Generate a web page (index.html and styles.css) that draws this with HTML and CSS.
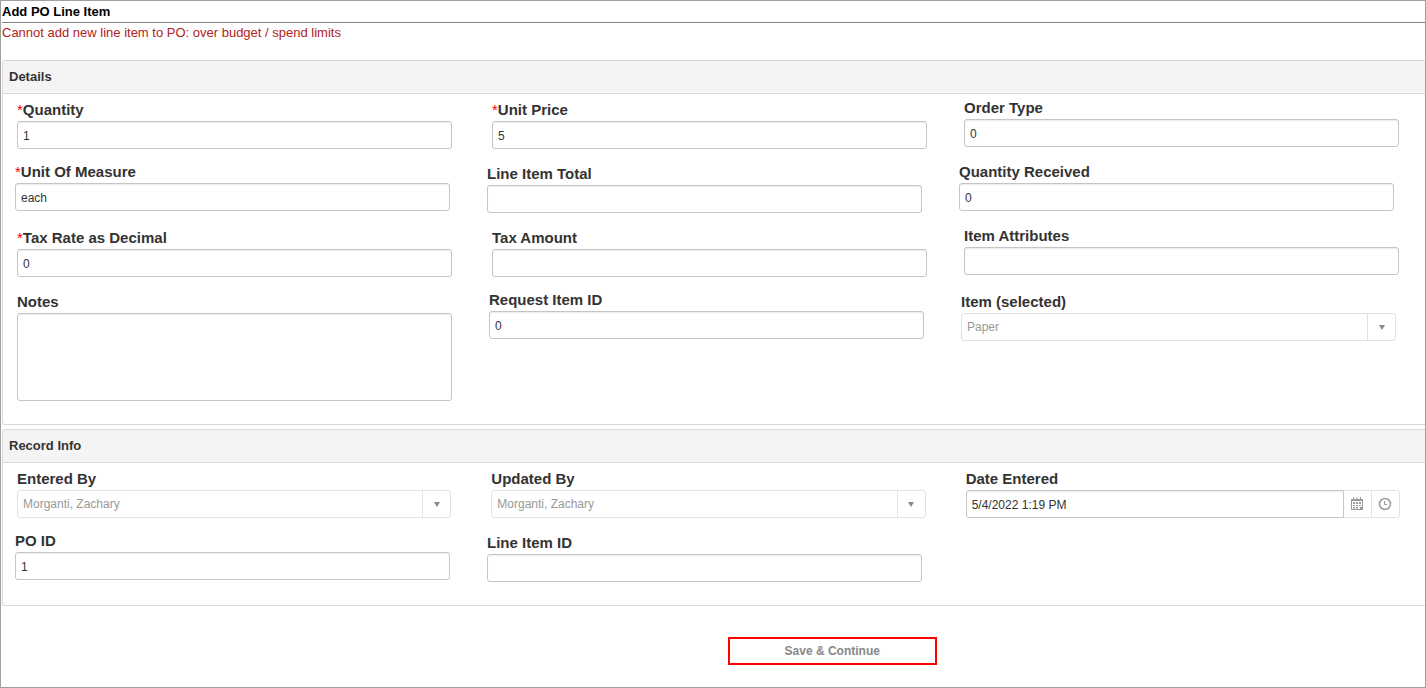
FILE: index.html
```html
<!DOCTYPE html>
<html lang="en">
<head>
<meta charset="utf-8">
<title>Add PO Line Item</title>
<link rel="stylesheet" href="styles.css">
</head>
<body>
<form class="page">
  <h1 class="title">Add PO Line Item</h1>
  <p class="message">Cannot add new line item to PO: over budget / spend limits</p>

  <section class="panel">
    <h2 class="panel-title">Details</h2>
    <div class="panel-body">
      <div class="row row-wide">
        <div class="field low"><label class="label" for="qty"><span class="req">*</span>Quantity</label><input class="input" id="qty" value="1"></div>
        <div class="field low"><label class="label" for="price"><span class="req">*</span>Unit Price</label><input class="input" id="price" value="5"></div>
        <div class="field"><label class="label" for="otype">Order Type</label><input class="input" id="otype" value="0"></div>
      </div>
      <div class="row row-narrow">
        <div class="field"><label class="label" for="uom"><span class="req">*</span>Unit Of Measure</label><input class="input" id="uom" value="each"></div>
        <div class="field low"><label class="label" for="total">Line Item Total</label><input class="input" id="total"></div>
        <div class="field"><label class="label" for="received">Quantity Received</label><input class="input" id="received" value="0"></div>
      </div>
      <div class="row row-wide">
        <div class="field low"><label class="label" for="rate"><span class="req">*</span>Tax Rate as Decimal</label><input class="input" id="rate" value="0"></div>
        <div class="field low"><label class="label" for="tax">Tax Amount</label><input class="input" id="tax"></div>
        <div class="field"><label class="label" for="attrs">Item Attributes</label><input class="input" id="attrs"></div>
      </div>
      <div class="row">
        <div class="field low"><label class="label" for="notes">Notes</label><textarea class="input notes" id="notes"></textarea></div>
        <div class="field"><label class="label" for="reqid">Request Item ID</label><input class="input" id="reqid" value="0"></div>
        <div class="field low">
          <label class="label" for="item">Item (selected)</label>
          <div class="combo"><select class="combo-select" id="item" disabled><option>Paper</option></select><span class="combo-button"><svg class="arrow" viewBox="0 0 6 5"><path d="M0 0h6L3 5z"/></svg></span></div>
        </div>
      </div>
    </div>
  </section>

  <section class="panel">
    <h2 class="panel-title">Record Info</h2>
    <div class="panel-body">
      <div class="row row-even">
        <div class="field low">
          <label class="label" for="entered">Entered By</label>
          <div class="combo"><select class="combo-select" id="entered" disabled><option>Morganti, Zachary</option></select><span class="combo-button"><svg class="arrow" viewBox="0 0 6 5"><path d="M0 0h6L3 5z"/></svg></span></div>
        </div>
        <div class="field low">
          <label class="label" for="updated">Updated By</label>
          <div class="combo"><select class="combo-select" id="updated" disabled><option>Morganti, Zachary</option></select><span class="combo-button"><svg class="arrow" viewBox="0 0 6 5"><path d="M0 0h6L3 5z"/></svg></span></div>
        </div>
        <div class="field low">
          <label class="label" for="date">Date Entered</label>
          <div class="picker">
            <input class="input picker-input" id="date" value="5/4/2022 1:19 PM">
            <button class="picker-button" type="button" aria-label="Open calendar"><svg class="icon" viewBox="0 0 14 14"><path fill="none" stroke="#999" d="M1.500 2.500h11v10h-11z"/><path fill="#999" d="M1 2h12v2H1zM3 0h1v3H3zM6.500 0h1v3h-1zM10 0h1v3h-1zM3 5h2v2H3zM6 5h2v2H6zM9 5h2v2H9zM3 8h2v1H3zM6 8h2v1H6zM9 8h2v1H9zM3 10h2v1.500H3zM6 10h2v1.500H6zM10 13v-3h3v2l-1 1z"/></svg></button>
            <button class="picker-button" type="button" aria-label="Open time list"><svg class="icon" viewBox="0 0 14 14"><circle cx="7" cy="7" r="5.500" fill="none" stroke="#999" stroke-width="1.500"/><path fill="none" stroke="#999" d="M6.500 4v3.500H9"/></svg></button>
          </div>
        </div>
      </div>
      <div class="row row-narrow">
        <div class="field"><label class="label" for="poid">PO ID</label><input class="input" id="poid" value="1"></div>
        <div class="field low"><label class="label" for="lineid">Line Item ID</label><input class="input" id="lineid"></div>
        <div class="field"></div>
      </div>
    </div>
  </section>

  <div class="actions"><button class="save" type="submit">Save &amp; Continue</button></div>
</form>
</body>
</html>
```
FILE: styles.css
```css
* { box-sizing: border-box; }

body {
  margin: 0;
  background: #fff;
  color: #333;
  font-family: "Liberation Sans", Arial, sans-serif;
}

.page {
  min-height: 100vh;
  border: 1px solid #a0a0a0;
  padding-left: 1px;
}

.title {
  margin: 0;
  border-bottom: 1px solid #808080;
  color: #000;
  font-size: 13px;
  line-height: 21px;
}

.message {
  margin: 0 0 17px;
  color: #b22222;
  font-size: 13px;
  line-height: 20px;
}

.panel {
  margin-bottom: 4px;
  border: 1px solid #d9d9d9;
  border-right: 0;
  border-radius: 3px 0 0 3px;
}

.panel-title {
  margin: 0;
  padding-left: 6px;
  border-bottom: 1px solid #d9d9d9;
  background: #f4f4f4;
  font-size: 13px;
  line-height: 32px;
}

.panel-body { padding: 4px 0 23px; }

.row {
  display: flex;
  align-items: flex-start;
  gap: 37px;
  min-height: 64px;
  padding: 0 29px 0 14px;
}

.row:last-child { min-height: 0; }
.row-narrow { padding: 0 31px 0 12px; }
.row-wide { padding-right: 26px; }
.row-wide .field:first-child { margin-right: 3px; }
.row-even { gap: 40px; padding-right: 25px; }

.field {
  flex: 1 1 0;
  min-width: 0;
}

.low { padding-top: 2px; }

.label {
  display: block;
  margin-bottom: 2px;
  font-size: 15px;
  font-weight: bold;
  line-height: 19px;
}

.req {
  color: #f00;
  font-weight: normal;
}

.input {
  display: block;
  width: 100%;
  height: 28px;
  margin: 0;
  padding: 1px 5px 0;
  border: 1px solid #c5c5c5;
  border-radius: 3px;
  background: #fff;
  box-shadow: inset 0 1px 1px #eee;
  color: #333;
  font: 12px "Liberation Sans", Arial, sans-serif;
}

.notes {
  height: 88px;
  resize: none;
}

.combo {
  display: flex;
  height: 28px;
  border: 1px solid #e2e2e2;
  border-radius: 3px;
}

.combo-select {
  flex: 1;
  min-width: 0;
  padding: 0 5px;
  border: 0;
  background: none;
  color: #999;
  font: 12px "Liberation Sans", Arial, sans-serif;
  opacity: 1;
  appearance: none;
}

.combo-button {
  display: flex;
  align-items: center;
  justify-content: center;
  width: 28px;
  border-left: 1px solid #e2e2e2;
}

.arrow {
  width: 6px;
  height: 5px;
  fill: #888;
}

.picker { display: flex; }

.picker-input {
  flex: 1;
  min-width: 0;
  border-radius: 3px 0 0 3px;
}

.picker-button {
  display: flex;
  align-items: center;
  justify-content: center;
  width: 28px;
  height: 28px;
  padding: 0;
  border: 1px solid #e2e2e2;
  border-left: 0;
  background: #fff;
}

.picker-button:last-child { border-radius: 0 3px 3px 0; }

.icon {
  width: 14px;
  height: 14px;
}

.actions { padding: 27px 0 20px 51%; }

.save {
  display: block;
  width: 209px;
  height: 28px;
  border: 2px solid #f00;
  background: #fff;
  color: #888;
  font: bold 12px "Liberation Sans", Arial, sans-serif;
}
```
